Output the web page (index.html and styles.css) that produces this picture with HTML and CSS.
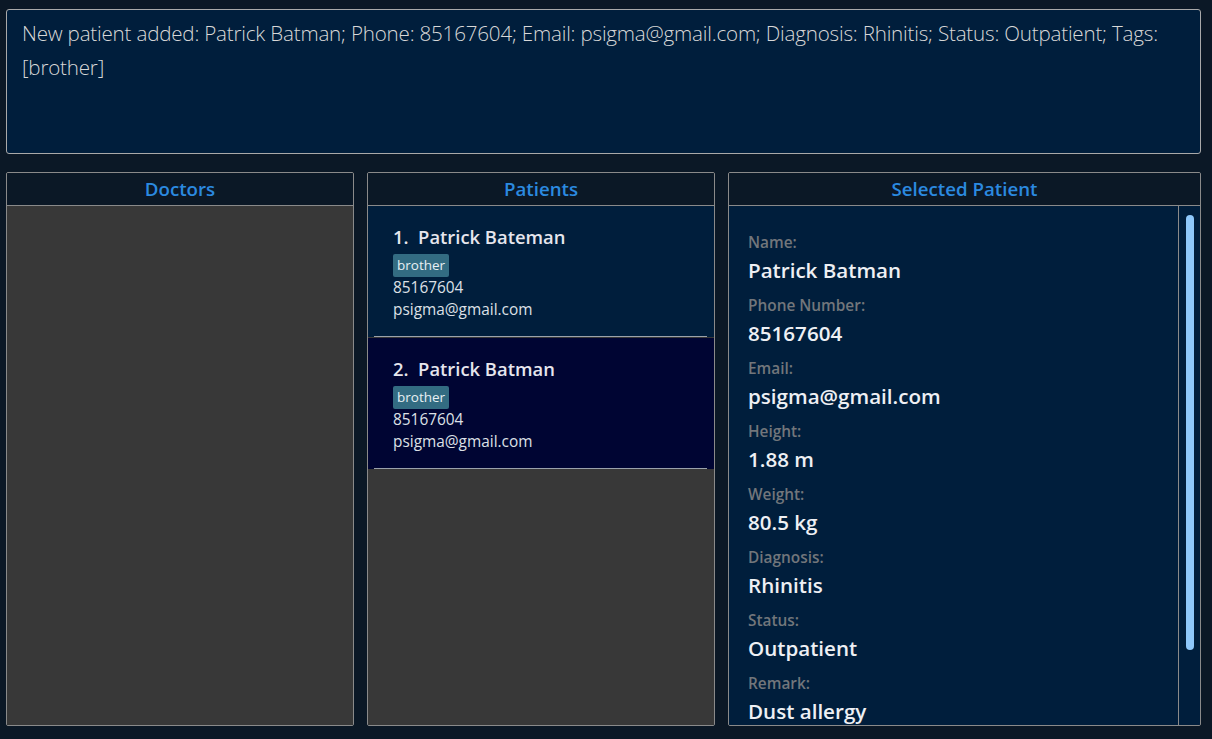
FILE: index.html
```html
<!DOCTYPE html>
<html>
<head>
<meta charset="utf-8">
<link rel="stylesheet" href="styles.css">
</head>
<body>
<div class="app">
  <div class="result">New patient added: Patrick Batman; Phone: 85167604; Email: psigma@gmail.com; Diagnosis: Rhinitis; Status: Outpatient; Tags: [brother]</div>
  <div class="panels">
    <section class="panel doctors">
      <header class="panel-head">Doctors</header>
      <div class="panel-body gray"></div>
    </section>
    <section class="panel patients">
      <header class="panel-head">Patients</header>
      <div class="panel-body gray list">
        <div class="card">
          <div class="pname">1.&nbsp; Patrick Bateman</div>
          <span class="tag">brother</span>
          <div class="pline">85167604</div>
          <div class="pline">psigma@gmail.com</div>
        </div>
        <div class="card selected">
          <div class="pname">2.&nbsp; Patrick Batman</div>
          <span class="tag">brother</span>
          <div class="pline">85167604</div>
          <div class="pline">psigma@gmail.com</div>
        </div>
      </div>
    </section>
    <section class="panel detail">
      <header class="panel-head">Selected Patient</header>
      <div class="panel-body detail-body">
        <div class="fields">
          <div class="label">Name:</div><div class="value">Patrick Batman</div>
          <div class="label">Phone Number:</div><div class="value">85167604</div>
          <div class="label">Email:</div><div class="value">psigma@gmail.com</div>
          <div class="label">Height:</div><div class="value">1.88 m</div>
          <div class="label">Weight:</div><div class="value">80.5 kg</div>
          <div class="label">Diagnosis:</div><div class="value">Rhinitis</div>
          <div class="label">Status:</div><div class="value">Outpatient</div>
          <div class="label">Remark:</div><div class="value">Dust allergy</div>
        </div>
        <div class="scroll"><div class="thumb"></div></div>
      </div>
    </section>
  </div>
</div>
</body>
</html>
```
FILE: styles.css
```css
html, body {
  margin: 0;
  padding: 0;
  background: #0b1826;
  height: 739px;
  overflow: hidden;
}
body {
  font-family: "Open Sans", "Noto Sans", sans-serif;
  color: #fff;
}
.app {
  padding: 9px 11px 13px 6px;
  display: flex;
  flex-direction: column;
  gap: 18px;
  height: 739px;
  box-sizing: border-box;
}
.result {
  height: 145px;
  box-sizing: border-box;
  background: #001e3c;
  border: 1px solid #a9a9a9;
  border-radius: 3px;
  padding: 6px 15px;
  font-size: 20.6px;
  font-weight: 300;
  line-height: 34px;
  color: #d8d8d8;
  letter-spacing: -0.2px;
}
.panels {
  flex: 1;
  display: grid;
  grid-template-columns: 348px 348px 473px;
  gap: 13px;
  min-height: 0;
}
.panel {
  display: flex;
  flex-direction: column;
  border: 1px solid #8a8a8a;
  border-radius: 2px;
  min-height: 0;
  overflow: hidden;
}
.panel-head {
  height: 32px;
  flex: none;
  background: #0b1826;
  border-bottom: 1px solid #8a8a8a;
  color: #2b8ae0;
  font-weight: 600;
  font-size: 18.7px;
  text-align: center;
  line-height: 32px;
}
.panel-body {
  flex: 1;
  min-height: 0;
}
.gray { background: #383838; }
.list {
  display: flex;
  flex-direction: column;
}
.card {
  background: #001e3c;
  padding: 18px 24px 16px 25px;
  height: 131px;
  box-sizing: border-box;
  position: relative;
}
.card::after {
  content: "";
  position: absolute;
  left: 6px;
  right: 7px;
  bottom: 0;
  height: 1px;
  background: #9aa2ab;
}
.card + .card { margin-top: 1px; }
.card.selected { background: #000533; }
.pname {
  font-size: 18.4px;
  font-weight: 600;
  color: #e6e6ee;
  line-height: 26px;
}
.tag {
  display: inline-block;
  background: #336c82;
  color: #e8f0f4;
  font-size: 13.5px;
  border-radius: 2px;
  padding: 0 4px;
  line-height: 23px;
  margin-top: 4px;
}
.pline {
  font-size: 15.4px;
  color: #dde0e6;
  line-height: 22px;
}
.detail-body {
  background: #001e3c;
  display: flex;
}
.fields {
  flex: 1;
  padding: 27px 20px 0 19px;
  border-right: 1px solid #8a8a8a;
}
.label {
  font-size: 15.4px;
  font-weight: 600;
  color: #72767b;
  line-height: 20px;
  margin-bottom: 3px;
}
.value {
  font-size: 20.6px;
  font-weight: 600;
  color: #eef0f4;
  line-height: 28px;
  margin-bottom: 12px;
}
.scroll {
  width: 21px;
  flex: none;
  padding-top: 9px;
  display: flex;
  justify-content: center;
}
.thumb {
  width: 8px;
  height: 435px;
  border-radius: 4px;
  background: #8ec8fb;
}
```
